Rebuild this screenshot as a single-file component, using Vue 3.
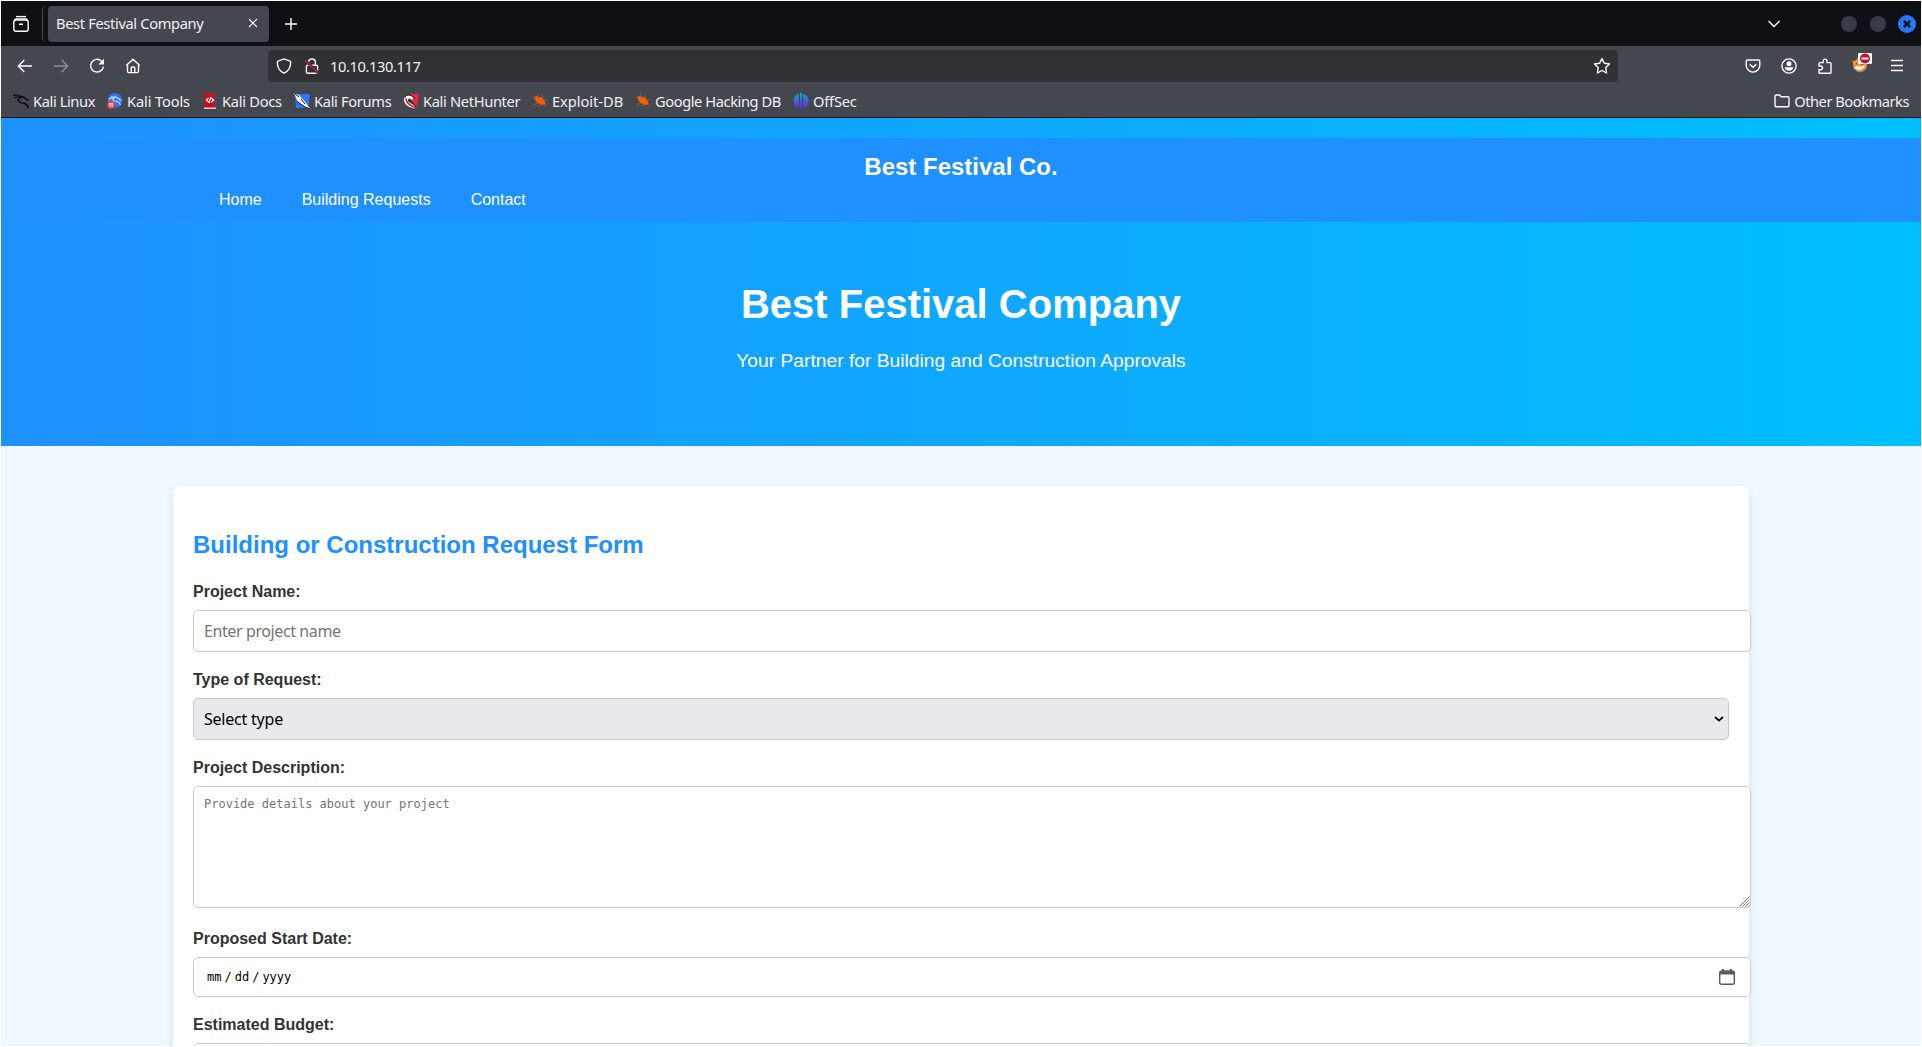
<!-- eslint-disable vue/multi-word-component-names -->
<template>
    <div class="window">
        <div class="tabbar">
            <svg class="view-icon" width="18" height="18" viewBox="0 0 18 18">
                <path d="M4 1.6h10" class="line" />
                <rect x="1.8" y="5" width="14.4" height="11.2" rx="2.2" class="line" />
                <path d="M2.5 5.2q.4-1.2 1.6-1.2h9.8q1.2 0 1.6 1.2M7 9.2h4" class="line" />
            </svg>
            <div class="tab">
                <span class="tab-title">Best Festival Company</span>
                <svg width="10" height="10" viewBox="0 0 10 10"><path d="M1 1l8 8M9 1l-8 8" class="line thin" /></svg>
            </div>
            <svg class="plus" width="14" height="14" viewBox="0 0 14 14"><path d="M7 1v12M1 7h12" class="line" /></svg>
            <svg class="chevron" width="14" height="8" viewBox="0 0 14 8"><path d="M1.5 1l5.5 5.5L12.5 1" class="line" /></svg>
            <div class="controls">
                <i class="dot"></i>
                <i class="dot"></i>
                <svg width="18" height="18" viewBox="0 0 18 18">
                    <circle cx="9" cy="9" r="9" fill="#2777ff" />
                    <path d="M5.8 5.8l6.4 6.4M12.2 5.8l-6.4 6.4" stroke="#0e1015" stroke-width="2.4" />
                </svg>
            </div>
        </div>

        <div class="toolbar">
            <div class="nav-buttons">
                <svg width="16" height="16" viewBox="0 0 16 16"><path d="M15 8H1.5M7.3 2L1.3 8l6 6" class="line" /></svg>
                <svg class="dim" width="16" height="16" viewBox="0 0 16 16"><path d="M1 8h13.5M8.7 2l6 6-6 6" class="line" /></svg>
                <svg width="16" height="16" viewBox="0 0 16 16">
                    <path d="M12.6 3.2A6.4 6.4 0 1 0 14.4 8.6" class="line" />
                    <path d="M15 .8v5.7H9.3z" fill="#fbfbfe" />
                </svg>
                <svg width="16" height="16" viewBox="0 0 16 16">
                    <path d="M1.2 7.6L8 1.2l6.8 6.4M2.5 6.8v6.4q0 1.4 1.4 1.4h8.2q1.4 0 1.4-1.4V6.8M6.2 14.4V10q0-1 1-1h1.6q1 0 1 1v4.4" class="line" />
                </svg>
            </div>
            <div class="urlbar">
                <svg width="16" height="16" viewBox="0 0 16 16">
                    <path d="M8 .9l6 2.2q.7.3.7 1c0 5-1.7 9-6.7 11.1C3 13.1 1.3 9.1 1.3 4.1q0-.7.7-1z" class="line" />
                </svg>
                <svg class="lock" width="16" height="16" viewBox="0 0 16 16">
                    <path d="M4.6 7V4.4a3.4 3.4 0 0 1 6.8 0V7M3.8 7.2h8.4q1.4 0 1.4 1.4V14q0 1.2-1.4 1.2H3.8Q2.4 15.2 2.4 14V8.600q0-1.4 1.4-1.4z" class="line" />
                    <path d="M1.3 2.2l13 12.8" stroke="#303136" stroke-width="3" />
                    <path d="M1 2.2l13.4 12.9" stroke="#d9174a" stroke-width="1.4" />
                </svg>
                <span class="url">10.10.130.117</span>
                <svg class="star" width="18" height="18" viewBox="0 0 18 18">
                    <path d="M9 1.500l2.300 4.800 5.200.7-3.800 3.700.9 5.300L9 13.500 4.400 16l.9-5.300L1.500 7l5.200-.7z" class="line" stroke-linejoin="round" />
                </svg>
            </div>
            <div class="tools">
                <svg width="16" height="16" viewBox="0 0 16 16">
                    <path d="M2.500 2h11q1.300 0 1.300 1.300v4A6.700 6.700 0 0 1 1.200 7.300v-4Q1.200 2 2.500 2zM4.700 6.200L8 9.300l3.300-3.100" class="line" />
                </svg>
                <svg width="16" height="16" viewBox="0 0 16 16">
                    <circle cx="8" cy="8" r="7.1" class="line" />
                    <circle cx="8" cy="5.7" r="2.5" fill="#fbfbfe" />
                    <path d="M3.6 9.3h8.8q-.6 3.4-4.4 3.4T3.600 9.300z" fill="#fbfbfe" />
                </svg>
                <svg width="16" height="16" viewBox="0 0 16 16">
                    <path d="M2 8V5.400q0-.8.800-.8h3.400V3a1.900 1.900 0 0 1 3.800 0v1.600h3.200q.8 0 .8.8v9q0 .8-.8.8H2.800q-.8 0-.8-.8v-2.700h1.700a1.800 1.800 0 0 0 0-3.700z" class="line" />
                </svg>
                <svg class="fox" width="22" height="20" viewBox="0 0 22 20">
                    <circle cx="9" cy="12" r="6.800" fill="#ef963b" stroke="#9b8272" stroke-width="1" />
                    <path d="M1 7.500l4 1 3-2.500 4 5 4-1-2 4-4-1-5 2.500-2-3z" fill="#f7922c" />
                    <path d="M3 14.500l3-1.500 4 .6 4-2-1 3-4 2.700-4-1z" fill="#fff1df" />
                    <path d="M1.500 7.400l4-1.400M5 10.500l1.200.5M10.300 12l2-1" stroke="#5c3b27" stroke-width="1" />
                    <rect x="7" y="0" width="14" height="11" rx="1" fill="#fff" />
                    <circle cx="14" cy="5.500" r="5" fill="#c60f2e" />
                    <path d="M10.500 5.500h7" stroke="#fff" stroke-width="2" />
                </svg>
                <svg width="16" height="16" viewBox="0 0 16 16"><path d="M2 2.500h12M2 7.500h12M2 12.500h12" class="line" /></svg>
            </div>
        </div>

        <div class="bookmarks">
            <div v-for="b in bookmarks" :key="b.name" class="bookmark" :style="{ width: b.width + 'px', letterSpacing: b.spacing + 'px' }">
                <svg width="16" height="16" viewBox="0 0 16 16">
                    <g v-if="b.icon === 'dragon'" fill="none" stroke="#08090b">
                        <path d="M0 2.500q5-1.500 9 1.500M1 5q4-2 8-.8" stroke-width="1.200" />
                        <path d="M8.500 4.200q-4 1-3.200 3.300t6 2.700q3 .8 4 4.800" stroke-width="1.500" />
                        <path d="M8 3.500q3.500 0 5.700 3.200l1.800.6" stroke-width="1.500" />
                    </g>
                    <g v-else-if="b.icon === 'tools'">
                        <circle cx="8" cy="7.500" r="7.300" fill="#2777ff" />
                        <path d="M4 4q5-1 8 2l2 2M8 4.500Q4.500 6 7 8q5 0 6.500 4M2 6.500q2-2 4-1.500" fill="none" stroke="#cfe3ff" stroke-width="1.200" />
                        <circle cx="4" cy="12" r="4" fill="#f0393f" />
                        <path d="M1.800 10.800h4.600M3 11v3M5.200 11v3" stroke="#fff" stroke-width="1" />
                    </g>
                    <g v-else-if="b.icon === 'docs'">
                        <path d="M2 0h11v16H2z" fill="#c8101a" />
                        <path d="M13 1h1.500v14H13z" fill="#1d5b9f" />
                        <path d="M2 14.500h12V16H2z" fill="#d8cfc3" />
                        <path d="M6.500 4.800L4.300 7l2.200 2M9.300 5l2.300 2-2.300 2.200M8.800 4L7 10" fill="none" stroke="#fff" stroke-width="1.200" />
                    </g>
                    <g v-else-if="b.icon === 'forums'">
                        <path d="M1 1h15l-2 14H2z" fill="#2777ff" />
                        <path d="M0 .5l5 1.500 7 8 4 5.500-5-1.500-7-5z" fill="#fff" />
                        <path d="M1 1l4 3M3 8.500l8 5.500 4 1.500M7 6l4 5" fill="none" stroke="#16181d" stroke-width="1" />
                    </g>
                    <g v-else-if="b.icon === 'nethunter'">
                        <path d="M7 1h9l-2 13-5-6z" fill="#f0263d" />
                        <path d="M1 8q-1-5 4-6 4-.7 6 3l-2 2Q6 4.500 5 6.500T8 10l6 4.500-3 1Q2.500 13.500 1 8z" fill="#fff" />
                        <path d="M3 5.500Q3 9 6.500 11.500T13 15" fill="none" stroke="#e0233a" stroke-width="1.600" />
                        <path d="M1.500 5Q3 1.500 7 2.200T11 6M6 7q1 2.500 4 4l3.500 3.500" fill="none" stroke="#111" stroke-width="1" />
                    </g>
                    <g v-else-if="b.icon === 'bug'">
                        <path d="M2.500 3.500l2.500-.5 2 1.500L9.500 4l3 3.500 1 3.500-3.500 1-4.500-2L3 7z" fill="#f2600c" />
                        <path d="M.5 4.500H4M5 1l2.500 3M10 2l1 4M12 7.500l3.500-.8M1.500 11.800L6 10M6 13l3-1.500M12 11l2.500 2" stroke="#b65a25" stroke-width=".8" />
                    </g>
                    <g v-else>
                        <defs>
                            <linearGradient id="offsec" x1="0" y1="0" x2="0" y2="1">
                                <stop offset="0" stop-color="#10aeca" />
                                <stop offset="1" stop-color="#6422dc" />
                            </linearGradient>
                        </defs>
                        <path d="M5.800.7v14.600Q.5 13.500.5 8T5.800.7zM7 0h2v16H7zM10.200.7Q15.500 2.500 15.500 8t-5.300 7.300z" fill="url(#offsec)" />
                    </g>
                </svg>
                <span>{{ b.name }}</span>
            </div>
            <div class="bookmark other">
                <svg width="16" height="16" viewBox="0 0 16 16">
                    <path d="M1 3.200Q1 2 2.200 2h3.300l1.700 1.800h6.600Q15 3.800 15 5v7.600q0 1.200-1.200 1.200H2.200Q1 13.800 1 12.600z" class="line" />
                </svg>
                <span>Other Bookmarks</span>
            </div>
        </div>

        <main class="page">
            <header class="hero">
                <nav class="navbar">
                    <div class="brand">Best Festival Co.</div>
                    <div class="links">
                        <a v-for="link in links" :key="link">{{ link }}</a>
                    </div>
                </nav>
                <h1>Best Festival Company</h1>
                <p>Your Partner for Building and Construction Approvals</p>
            </header>

            <form class="card" @submit.prevent>
                <h2>Building or Construction Request Form</h2>

                <label>Project Name:</label>
                <input v-model="projectName" class="field" type="text" placeholder="Enter project name">

                <label>Type of Request:</label>
                <div class="select-wrap">
                    <select v-model="requestType" class="field">
                        <option value="">Select type</option>
                    </select>
                    <svg class="arrow" width="10" height="6" viewBox="0 0 10 6"><path d="M1 1l4 3.600L9 1" fill="none" stroke="#000" stroke-width="1.700" /></svg>
                </div>

                <label>Project Description:</label>
                <div class="area-wrap">
                    <textarea v-model="description" class="field" placeholder="Provide details about your project"></textarea>
                    <svg class="grip" width="11" height="11" viewBox="0 0 11 11">
                        <path d="M.5 10.500l10-10M3.500 10.500l7-7M6.500 10.500l4-4M9.500 10.500l1-1" stroke="#777" stroke-width="1" />
                    </svg>
                </div>

                <label>Proposed Start Date:</label>
                <div class="field date">
                    <span>mm</span><span>/</span><span>dd</span><span>/</span><span>yyyy</span>
                    <svg width="16" height="16" viewBox="0 0 16 16">
                        <rect x=".7" y="2.200" width="14.600" height="13" rx="1.800" fill="none" stroke="#5b5b5f" stroke-width="1.400" />
                        <path d="M.5 5.500V3.500Q.5 1.500 2.500 1.500H3V0h2v1.500h6V0h2v1.500h.5q2 0 2 2v2z" fill="#5b5b5f" />
                    </svg>
                </div>

                <label>Estimated Budget:</label>
                <input v-model="budget" class="field" type="text">
            </form>
        </main>
    </div>
</template>

<script setup>
    import { ref } from 'vue';

    const bookmarks = ref([
        { name: 'Kali Linux', icon: 'dragon', width: 94, spacing: -0.4 },
        { name: 'Kali Tools', icon: 'tools', width: 95, spacing: -0.14 },
        { name: 'Kali Docs', icon: 'docs', width: 92, spacing: -0.27 },
        { name: 'Kali Forums', icon: 'forums', width: 109, spacing: -0.33 },
        { name: 'Kali NetHunter', icon: 'nethunter', width: 129, spacing: -0.34 },
        { name: 'Exploit-DB', icon: 'bug', width: 103, spacing: -0.04 },
        { name: 'Google Hacking DB', icon: 'bug', width: 158, spacing: -0.42 },
        { name: 'OffSec', icon: 'offsec', width: 70, spacing: -0.2 },
    ]);
    const links = ['Home', 'Building Requests', 'Contact'];

    const projectName = ref('');
    const requestType = ref('');
    const description = ref('');
    const budget = ref('');
</script>

<style>
    body {
        margin: 0;
        background: #fff;
    }
</style>

<style scoped>
    .window {
        box-sizing: border-box;
        width: 1922px;
        height: 1047px;
        border: 1px solid #fff;
        overflow: hidden;
        display: flex;
        flex-direction: column;
        font-family: "Noto Sans", sans-serif;
        font-size: 14.67px;
        color: #f0f0f3;
    }
    svg {
        display: block;
        flex: none;
    }
    .line {
        fill: none;
        stroke: #fbfbfe;
        stroke-width: 1.4;
    }
    .thin {
        stroke-width: 1.1;
    }
    .dim {
        opacity: 0.4;
    }

    /* browser chrome */
    .tabbar {
        height: 45px;
        flex: none;
        display: flex;
        align-items: center;
        background: #0e1015;
    }
    .view-icon {
        margin-left: 11px;
    }
    .tab {
        box-sizing: border-box;
        width: 221px;
        height: 36px;
        margin-left: 18px;
        padding: 0 11px 1px 8px;
        display: flex;
        align-items: center;
        justify-content: space-between;
        border-radius: 4px;
        background: #45474e;
        box-shadow: -5px 0 0 #0e1015, -6px 0 0 #45474e;
    }
    .tab-title {
        white-space: nowrap;
        letter-spacing: -0.35px;
    }
    .plus {
        margin-left: 15px;
    }
    .chevron {
        margin-left: auto;
    }
    .controls {
        display: flex;
        align-items: center;
        gap: 13px;
        margin: 0 5px 0 60px;
    }
    .controls svg {
        margin-left: -1px;
    }
    .dot {
        width: 16px;
        height: 16px;
        border-radius: 50%;
        background: #373c4a;
    }
    .toolbar {
        height: 40px;
        flex: none;
        display: flex;
        align-items: center;
        background: #45474e;
    }
    .nav-buttons {
        display: flex;
        gap: 20px;
        margin-left: 16px;
    }
    .urlbar {
        box-sizing: border-box;
        width: 1350px;
        height: 32px;
        margin-left: 127px;
        padding: 0 7px 0 8px;
        display: flex;
        align-items: center;
        border-radius: 4px;
        background: #303136;
    }
    .lock {
        margin-left: 12px;
    }
    .url {
        margin-left: 10px;
        letter-spacing: -0.4px;
    }
    .star {
        margin-left: auto;
    }
    .tools {
        display: flex;
        align-items: center;
        gap: 20px;
        margin-left: 127px;
    }
    .fox {
        margin: -6px -4px 0 -2px;
    }
    .bookmarks {
        box-sizing: border-box;
        height: 32px;
        flex: none;
        display: flex;
        align-items: center;
        padding: 0 12px 2px;
        border-bottom: 1px solid #0e1015;
        background: #45474e;
    }
    .bookmark {
        flex: none;
        display: flex;
        align-items: center;
        gap: 4px;
        white-space: nowrap;
    }
    .other {
        margin-left: auto;
        letter-spacing: -0.47px;
    }

    /* web page */
    .page {
        flex: 1;
        min-height: 0;
        overflow: hidden;
        font-family: "Liberation Sans", Arial, sans-serif;
        font-size: 16px;
        background: #f0f8ff;
    }
    .hero {
        box-sizing: border-box;
        height: 328px;
        padding-top: 20px;
        text-align: center;
        color: #fff;
        background: linear-gradient(to right, #1e90ff, #00bfff);
    }
    .navbar {
        box-sizing: border-box;
        height: 84px;
        padding-top: 15px;
        background: #1e90ff;
    }
    .brand {
        font-size: 24px;
        font-weight: bold;
        line-height: 27px;
    }
    .links {
        display: flex;
        gap: 40px;
        margin-top: 11px;
        padding-left: 218px;
        line-height: 18px;
    }
    h1 {
        margin: 60px 0 0;
        font-size: 40px;
        line-height: 45px;
    }
    p {
        margin: 23px 0 0;
        font-size: 19.2px;
        line-height: 22px;
        letter-spacing: 0.02px;
    }
    .card {
        box-sizing: border-box;
        width: 1576px;
        height: 700px;
        margin: 40px auto 0;
        padding: 45px 20px 0;
        border-radius: 8px;
        background: #fff;
        box-shadow: 0 4px 8px rgba(0, 0, 0, 0.1);
    }
    h2 {
        margin: 0 0 25px;
        font-size: 24px;
        line-height: 27px;
        color: #1e90ff;
    }
    label {
        display: block;
        height: 27px;
        font-weight: bold;
        line-height: 18px;
        color: #333;
    }
    .field {
        display: block;
        box-sizing: border-box;
        width: 1558px;
        height: 42px;
        margin: 0 0 19px;
        padding: 10px;
        border: 1px solid #ccc;
        border-radius: 5px;
        outline: none;
        font-family: "Noto Sans", sans-serif;
        font-size: 16px;
        letter-spacing: -0.4px;
        background: #fff;
    }
    .field::placeholder {
        color: #757575;
        opacity: 1;
    }
    .select-wrap {
        position: relative;
        width: 1536px;
    }
    select.field {
        width: 1536px;
        padding: 0 10px;
        appearance: none;
        letter-spacing: -0.22px;
        color: #000;
        background: #e9e9ed;
    }
    .arrow {
        position: absolute;
        right: 5px;
        top: 18px;
    }
    .area-wrap {
        position: relative;
        width: 1558px;
        margin-bottom: 22px;
    }
    textarea.field {
        height: 122px;
        margin: 0;
        resize: none;
        font-family: "DejaVu Sans Mono", monospace;
        font-size: 12px;
        letter-spacing: 0;
        line-height: 15px;
    }
    .grip {
        position: absolute;
        right: 1px;
        bottom: 1px;
    }
    .date {
        display: flex;
        align-items: center;
        gap: 3px;
        height: 40px;
        padding: 0 15px 0 13px;
        font-family: "DejaVu Sans Mono", monospace;
        font-size: 12px;
        letter-spacing: 0;
        color: #000;
    }
    .date svg {
        margin-left: auto;
    }
</style>
